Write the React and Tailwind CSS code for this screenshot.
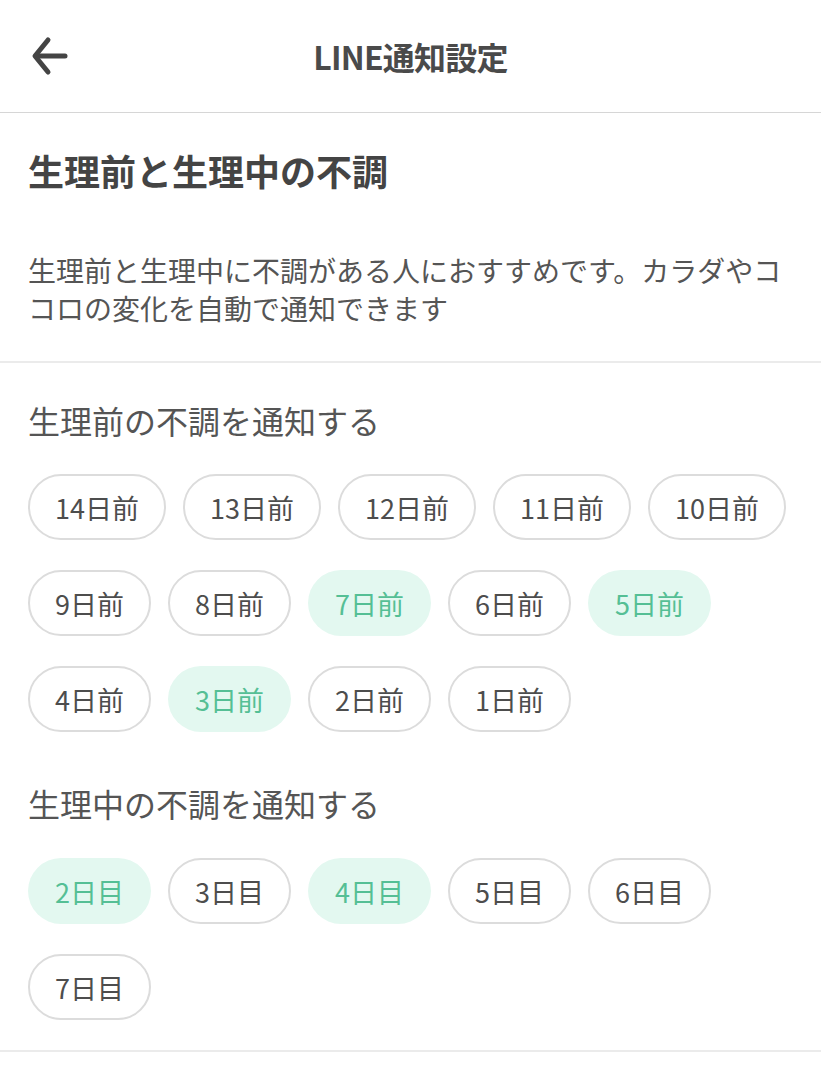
import { useState } from 'react';

const before = ['14日前', '13日前', '12日前', '11日前', '10日前', '9日前', '8日前', '7日前', '6日前', '5日前', '4日前', '3日前', '2日前', '1日前'];
const during = ['2日目', '3日目', '4日目', '5日目', '6日目', '7日目'];

const Chip = ({ label, active, onClick }) => (
  <button
    type="button"
    onClick={onClick}
    className={
      active
        ? 'h-[66px] px-[25px] rounded-full border-2 border-transparent bg-[#e3f8f0] text-[#55bf95] text-[27px] leading-none flex items-center'
        : 'h-[66px] px-[25px] rounded-full border-2 border-[#dcdcdc] bg-white text-[#4d4d4d] text-[27px] leading-none flex items-center'
    }
  >
    {label}
  </button>
);

const App = () => {
  const [beforeSel, setBeforeSel] = useState(['7日前', '5日前', '3日前']);
  const [duringSel, setDuringSel] = useState(['2日目', '4日目']);

  const toggle = (list, setList, v) => {
    setList(list.includes(v) ? list.filter((x) => x !== v) : [...list, v]);
  };

  return (
    <div
      className="min-h-screen bg-white text-[#4a4a4a]"
      style={{ fontFamily: '"Noto Sans CJK JP", "Noto Sans", sans-serif' }}
    >
      {/* Header */}
      <header className="h-[113px] border-b border-[#d6d6d6] grid grid-cols-[1fr_auto_1fr] items-center">
        <div className="pl-[31px] flex items-center">
          <svg width="38" height="40" viewBox="0 0 38 40" fill="none" stroke="#444" strokeWidth="5" strokeLinecap="round" strokeLinejoin="round">
            <path d="M34 20H6" />
            <path d="M17 4L4 20L17 36" />
          </svg>
        </div>
        <h1 className="text-[32px] leading-[40px] font-bold tracking-tight">LINE通知設定</h1>
        <div />
      </header>

      {/* Intro */}
      <section className="px-[28px] pt-[33px] pb-[34px] border-b-2 border-[#ebebeb]">
        <h2 className="text-[36px] leading-[48px] font-bold text-[#444]">生理前と生理中の不調</h2>
        <p className="mt-[57px] text-[28px] leading-[38px] text-[#555]">
          生理前と生理中に不調がある人におすすめです。カラダやココロの変化を自動で通知できます
        </p>
      </section>

      {/* Options */}
      <section className="px-[28px] pt-[37px] pb-[30px] border-b-2 border-[#ebebeb]">
        <h3 className="text-[32px] leading-[40px] text-[#555]">生理前の不調を通知する</h3>
        <div className="mt-[34px] flex flex-wrap gap-x-[17px] gap-y-[30px]">
          {before.map((d) => (
            <Chip key={d} label={d} active={beforeSel.includes(d)} onClick={() => toggle(beforeSel, setBeforeSel, d)} />
          ))}
        </div>

        <h3 className="mt-[51px] text-[32px] leading-[40px] text-[#555]">生理中の不調を通知する</h3>
        <div className="mt-[35px] flex flex-wrap gap-x-[17px] gap-y-[30px]">
          {during.map((d) => (
            <Chip key={d} label={d} active={duringSel.includes(d)} onClick={() => toggle(duringSel, setDuringSel, d)} />
          ))}
        </div>
      </section>
    </div>
  );
};

export default App;
